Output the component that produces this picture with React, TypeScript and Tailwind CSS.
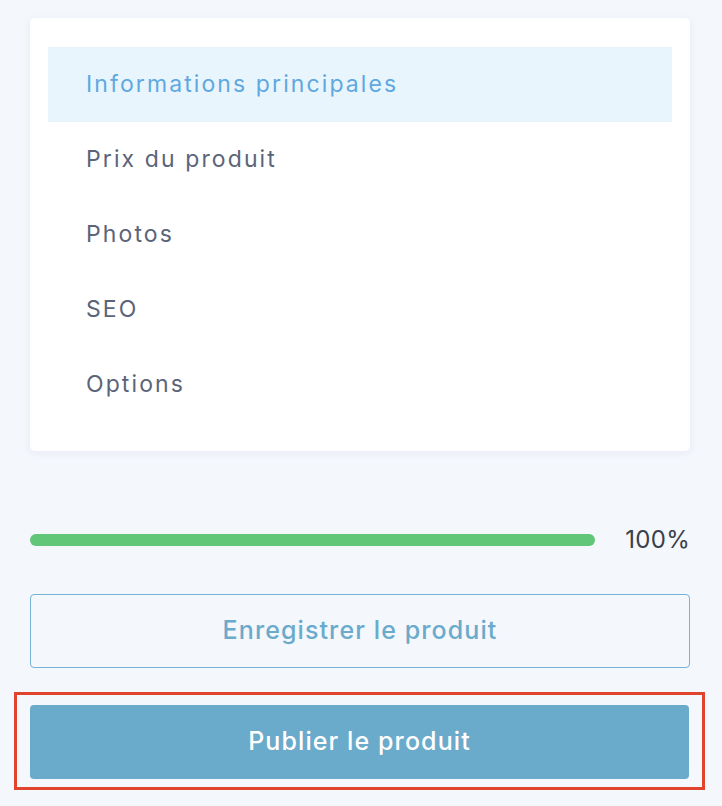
import * as React from "react"

const items = [
  "Informations principales",
  "Prix du produit",
  "Photos",
  "SEO",
  "Options",
]

export default function App() {
  const active = 0
  const progress = 100

  return (
    <div className="min-h-[806px] w-full bg-[#f4f7fc] pt-[18px] pl-[30px] pr-[32px] font-['Inter',sans-serif]">
      {/* Sections card */}
      <div className="rounded-[5px] bg-white px-[18px] py-[29px] shadow-[0_2px_10px_rgba(30,50,90,0.06)]">
        <ul className="flex flex-col">
          {items.map((item, i) => (
            <li
              key={item}
              className={`flex h-[75px] items-center pl-[38px] text-[23px] tracking-[2.1px] ${
                i === active ? "bg-[#e9f5fd] text-[#5fa8e0]" : "text-[#5b6478]"
              }`}
            >
              {item}
            </li>
          ))}
        </ul>
      </div>

      {/* Progress */}
      <div className="mt-[77px] flex h-[24px] items-center gap-[29px]">
        <div className="h-[12px] flex-1 rounded-full bg-[#e3e8ef]">
          <div
            className="h-full rounded-full bg-[#62c679]"
            style={{ width: `${progress}%` }}
          />
        </div>
        <span className="w-[66px] text-right text-[24px] tracking-[0.3px] text-[#3a3f4a]">{progress}%</span>
      </div>

      {/* Actions */}
      <button className="mt-[42px] flex h-[74px] w-full items-center justify-center rounded-[4px] border-[1.5px] border-[#74b3d1] bg-transparent text-[25px] font-medium tracking-[1.1px] text-[#6aaacb]">
        Enregistrer le produit
      </button>

      <div className="-ml-[16px] -mr-[15px] mt-[24px] border-[3px] border-[#e0442c] px-[13px] pt-[10px] pb-[8px]">
        <button className="flex h-[74px] w-full items-center justify-center rounded-[4px] bg-[#6aabcb] text-[25px] font-medium tracking-[1.1px] text-white">
          Publier le produit
        </button>
      </div>
    </div>
  )
}
